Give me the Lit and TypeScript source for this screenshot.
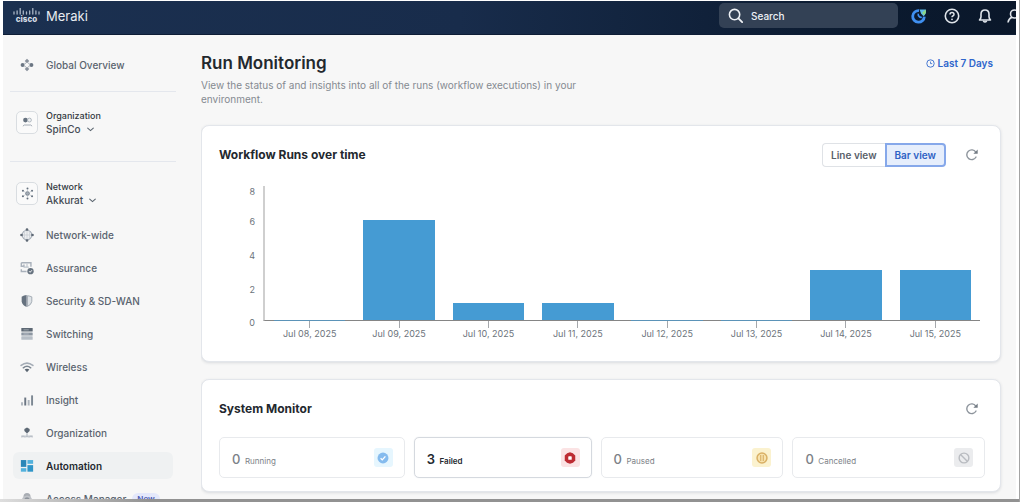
import { LitElement, html, css, svg } from "lit";
import { customElement, property, state } from "lit/decorators.js";
import { classMap } from "lit/directives/class-map.js";

const icons: Record<string, unknown> = {
  overview: svg`<g fill="#6b7683"><path d="M8 .8l2.600 2.600L8 6 5.400 3.400z" opacity=".8"/><path d="M8 10l2.600 2.600L8 15.200l-2.600-2.600z" opacity=".8"/><circle cx="3" cy="8" r="2.300"/><circle cx="13" cy="8" r="2.300"/></g><path d="M5.400 5.600l1 1M10.600 5.600l-1 1M5.400 10.400l1-1M10.600 10.400l-1-1" stroke="#a9b0b9" stroke-width="1.400"/>`,
  wide: svg`<circle cx="8" cy="8" r="5.500" fill="#eef0f2" stroke="#a4acb6" stroke-width="1.200"/><path d="M8 3v10M3 8h10M5.600 3.600q-1.600 4.400 0 8.800M10.400 3.600q1.600 4.400 0 8.800" fill="none" stroke="#c3c9d0" stroke-width=".8"/><g fill="#5d6874"><circle cx="8" cy="1.700" r="1.500"/><circle cx="8" cy="14.300" r="1.500"/><circle cx="1.700" cy="8" r="1.500"/><circle cx="14.300" cy="8" r="1.500"/></g>`,
  assurance: svg`<path d="M1.500 2h11v4.500M1.500 2v4h3v-2M1.500 9.500v2.500h6" fill="none" stroke="#a9b1bb" stroke-width="1.600"/><path d="M4 7h6M8 3v4" stroke="#bcc3cb" stroke-width="1.200"/><circle cx="12" cy="11.600" r="3.600" fill="#66727f"/><path d="M10.400 11.700l1.200 1.200 2-2.300" fill="none" stroke="#fff" stroke-width="1.100"/>`,
  shield: svg`<path d="M7.600 1.200Q4.500 1.700 1.900 3v5.500q.6 4.300 5.700 6.300z" fill="#66727f"/><path d="M8.500 1.900Q11.500 2.400 13.500 3.300v5.200q-.5 3.800-5 5.700z" fill="#dfe3e7" stroke="#9aa3ad" stroke-width="1"/>`,
  switching: svg`<rect x="1.500" y="1.200" width="13" height="4" rx=".6" fill="#5d6874"/><rect x="1.500" y="6.200" width="13" height="3.500" rx=".6" fill="#8d97a2"/><rect x="1.500" y="10.700" width="13" height="3.900" rx=".6" fill="#b7bec6"/><path d="M4 3.300h6M4 8h6" stroke="#c9ced4" stroke-width=".7"/>`,
  wireless: svg`<g fill="none" stroke-linecap="round"><path d="M1.300 6.200q6.700-5.300 13.400 0" stroke="#a4acb6" stroke-width="1.800"/><path d="M3.800 8.900q4.200-3.500 8.400 0" stroke="#7d8893" stroke-width="1.800"/></g><path d="M5.300 10.900q2.700-1.900 5.400 0L8 14z" fill="#596470"/>`,
  insight: svg`<path d="M2.300 14.300V10.500" stroke="#aeb5bd" stroke-width="2.200"/><path d="M6 14.300V5.200" stroke="#6b7683" stroke-width="2.200"/><path d="M9.900 14.300V8" stroke="#aeb5bd" stroke-width="2.200"/><path d="M13.800 14.300V2.700" stroke="#7d8893" stroke-width="2.200"/>`,
  org: svg`<path d="M8 1.800l3 1.500v2.500L8 8.500 5 5.800V3.300z" fill="#5d6874"/><path d="M2.200 13v-1.500h2.600V13M6.700 13v-1.500h2.600V13M11.200 13v-1.500h2.600V13M8 8.500v2" fill="none" stroke="#b0b7c0" stroke-width="1.300"/>`,
  automation: svg`<rect x="1" y="1.200" width="6.200" height="7.800" fill="#2a87b8"/><rect x="8.500" y="1.200" width="6.500" height="4.300" fill="#52b1dc"/><rect x="1" y="10.500" width="6.200" height="4" fill="#52b1dc"/><rect x="8.500" y="7" width="6.500" height="7.500" fill="#2f95c8"/>`,
  access: svg`<circle cx="8" cy="5" r="4" fill="#a9adb3"/><circle cx="8" cy="10" r="6" fill="#c0c3c8"/><circle cx="8" cy="9" r="3" fill="#8d939b"/>`,
  spinco: svg`<circle cx="5.500" cy="5" r="2.900" fill="#66727f"/><circle cx="10.400" cy="5" r="2.400" fill="#eef0f2" stroke="#a4acb6"/><path d="M2.300 12.500l1.700-1.400h8l1.700 1.400" fill="none" stroke="#9aa3ad" stroke-width="1.100"/>`,
  network: svg`<circle cx="8" cy="8" r="2.300" fill="#a4acb6" stroke="#66727f"/><g fill="#66727f"><circle cx="8" cy="1.800" r="1.200"/><circle cx="8" cy="14.200" r="1.200"/><circle cx="2.400" cy="4.600" r="1.300"/><circle cx="13.600" cy="4.600" r="1.300"/><circle cx="2.400" cy="11.400" r="1.300"/><circle cx="13.600" cy="11.400" r="1.300"/></g><path d="M3.500 5.300l3 1.800M12.500 5.300l-3 1.800M3.500 10.700l3-1.800M12.500 10.700l-3-1.800M8 3v2.500M8 10.500v2.500" stroke="#b7bec6" stroke-width=".8"/>`,
  chevron: svg`<path d="M3 5.500l5 4.500 5-4.500" fill="none" stroke="#59636e" stroke-width="1.900" stroke-linecap="round"/>`,
  search: svg`<circle cx="7" cy="7" r="5.500" fill="none" stroke="#eef1f5" stroke-width="1.700"/><path d="M11.100 11.100l4 4" stroke="#eef1f5" stroke-width="1.900" stroke-linecap="round"/>`,
  assistant: svg`<path d="M8 2.600A5.800 5.800 0 1 0 13.300 8.600" fill="none" stroke="#3f8ff0" stroke-width="2.800"/><path d="M7.300 5.600a3 3 0 0 0 3.500 3.700" fill="none" stroke="#3f8ff0" stroke-width="1.600"/><path d="M8.500 1.500h6.300q.9 4.500-2.300 6.800l-2.300-2.500z" fill="#5fb9e8"/><path d="M11 4.800l4-3.300q.4 3.800-1.900 5.800z" fill="#8ed780"/>`,
  help: svg`<circle cx="8" cy="8" r="6.700" fill="none" stroke="#dfe4ea" stroke-width="1.600"/><path d="M6 6.600q0-2 2-2t2 1.800q0 1-1.200 1.600-.8.400-.8 1.200" fill="none" stroke="#dfe4ea" stroke-width="1.500"/><circle cx="8" cy="11.300" r=".9" fill="#dfe4ea"/>`,
  bell: svg`<path d="M2.500 12h11q-1.500-1.500-1.500-3.200V6.300q0-4.300-4-4.300T4 6.300v2.500Q4 10.500 2.500 12z" fill="none" stroke="#dfe4ea" stroke-width="1.600" stroke-linejoin="round"/><path d="M6.300 12.800q1.700 2.400 3.400 0" fill="none" stroke="#dfe4ea" stroke-width="1.600"/>`,
  user: svg`<circle cx="8.500" cy="6" r="4" fill="none" stroke="#dfe4ea" stroke-width="1.600"/><path d="M2 14.500q.6-4 4-5.200M15 14.500q-.6-4-4-5.200" fill="none" stroke="#dfe4ea" stroke-width="1.600"/>`,
  clock: svg`<circle cx="8" cy="8" r="6.600" fill="none" stroke="#3f72d0" stroke-width="1.700"/><path d="M8 4.500V8.200h3" fill="none" stroke="#3f72d0" stroke-width="1.500"/>`,
  refresh: svg`<path d="M12.600 10.300A5.600 5.600 0 1 1 12.300 4.600" fill="none" stroke="#8d949c" stroke-width="1.600" stroke-linecap="round"/><path d="M14.500 1.600v5H9.600z" fill="#737b84"/>`,
  running: svg`<circle cx="8" cy="8" r="7.300" fill="#85bbee"/><path d="M4.800 8.300l2.200 2.200 4.200-4.700" fill="none" stroke="#fff" stroke-width="1.800"/>`,
  failed: svg`<path d="M8 .3l3.800 1.300 3.200 3.100V11.200L12 14.300 8 15.700 4 14.300 1 11.200V4.700l3.200-3.100z" fill="#bd2c33"/><rect x="5.700" y="5.700" width="4.600" height="4.600" rx=".8" fill="#fff"/>`,
  paused: svg`<circle cx="8" cy="8" r="6.600" fill="#f7e3ae" stroke="#d9b065" stroke-width="2"/><path d="M6.300 4v8M9.700 4v8" stroke="#d9b065" stroke-width="1.500"/>`,
  cancelled: svg`<circle cx="8" cy="8" r="6.500" fill="none" stroke="#b9bcc1" stroke-width="1.900"/><path d="M3.700 3.700l8.600 8.600" stroke="#b9bcc1" stroke-width="1.900"/>`,
};

@customElement("ui-icon")
class UiIcon extends LitElement {
  static styles = css`
    :host { display: inline-flex; flex: none; width: 14px; height: 14px; }
    svg { display: block; width: 100%; height: 100%; }
  `;
  @property() name = "";
  render() {
    return html`<svg viewBox="0 0 16 16" aria-hidden="true">${icons[this.name]}</svg>`;
  }
}

@customElement("app-header")
class AppHeader extends LitElement {
  static styles = css`
    :host {
      display: flex; align-items: center; height: 34px; box-sizing: border-box;
      padding-left: 10px; padding-bottom: 4px; flex: none; overflow: hidden;
      background: linear-gradient(90deg, #1b3050 0%, #182c4b 45%, #0b1a2f 85%, #0a172a 100%);
      border-bottom: 1px solid #0e1d36; color: #e8ecf1;
    }
    .brand { display: flex; align-items: center; gap: 6px; color: inherit; text-decoration: none; font-size: 13px; line-height: 18px; }
    .logo { display: grid; width: 27px; justify-items: center; }
    .bars { width: 27px; height: 7px; display: block; }
    .cisco { font-size: 8px; line-height: 8px; font-weight: 800; color: #d5dce5; }
    .search {
      display: flex; align-items: center; gap: 8px; height: 25px; width: 179px; box-sizing: border-box;
      margin-left: auto; padding: 0 9px; border-radius: 5px; background: #334155;
    }
    .search ui-icon { width: 15px; height: 15px; }
    .search input {
      flex: 1; min-width: 0; border: 0; padding: 0; outline: 0; background: none;
      font: 500 10px/16px Inter, sans-serif; color: #fff;
    }
    .search input::placeholder { color: #eef1f5; opacity: 1; }
    .tools { display: flex; gap: 17px; margin-left: 13px; margin-right: -6px; }
    .tools button { display: flex; border: 0; padding: 0; background: none; }
    .tools button:last-child { margin-left: -4px; }
    .tools ui-icon { width: 16px; height: 16px; }
  `;
  render() {
    return html`
      <a class="brand" href="#">
        <span class="logo">
          <svg class="bars" viewBox="0 0 27 7" aria-hidden="true">
            <path d="M1 4v2M4.100 3v3M7.200 .5v5.500M10.300 3v3M13.500 4v2M16.700 3v3M19.800 .5v5.500M22.900 3v3M26 4v2" stroke="#a9b5c5" stroke-width="1.300" stroke-linecap="round"/>
          </svg>
          <span class="cisco">cisco</span>
        </span>
        <span>Meraki</span>
      </a>
      <label class="search">
        <ui-icon name="search"></ui-icon>
        <input type="search" placeholder="Search" aria-label="Search" />
      </label>
      <div class="tools">
        <button aria-label="Assistant"><ui-icon name="assistant"></ui-icon></button>
        <button aria-label="Help"><ui-icon name="help"></ui-icon></button>
        <button aria-label="Notifications"><ui-icon name="bell"></ui-icon></button>
        <button aria-label="Account"><ui-icon name="user"></ui-icon></button>
      </div>
    `;
  }
}

@customElement("side-nav")
class SideNav extends LitElement {
  static styles = css`
    :host { display: block; width: 198px; flex: none; box-sizing: border-box; padding: 16px 25px 0 7px; overflow: hidden; }
    a { color: inherit; text-decoration: none; }
    .item {
      display: flex; align-items: center; gap: 12px; height: 27px; margin: 0 3px 6px; padding: 0 7px;
      border-radius: 6px; font-size: 10px; line-height: 14px; font-weight: 500; color: #5a646f;
    }
    .item.active { background: #eff1f2; color: #23282e; font-weight: 600; }
    .rule { height: 0; border: 0; border-top: 1px solid #e4e7ed; margin: 0; }
    .top { margin-bottom: 13px; }
    .picker {
      display: flex; align-items: center; gap: 8px; padding: 0 0 0 6px; border: 0; background: none;
      font: 500 10px/14px Inter, sans-serif; color: #454c54; text-align: left;
    }
    .org { margin: 17px 0 25px; }
    .net { margin: 18px 0 14px; }
    .box {
      display: flex; align-items: center; justify-content: center; width: 22px; height: 23px; box-sizing: border-box;
      border: 1px solid #d9dde1; border-radius: 5px; background: #fafafa;
    }
    .box ui-icon { width: 13px; height: 13px; }
    .kind { display: block; font-size: 9px; line-height: 13px; color: #33393f; }
    .name { display: flex; align-items: center; gap: 5px; }
    .name ui-icon { width: 9px; height: 9px; }
    .badge { margin-left: -6px; padding: 0 5px; border-radius: 6px; background: #e4e8fb; color: #4a5bb5; font-size: 8px; line-height: 12px; font-weight: 600; }
  `;
  private items = [
    ["wide", "Network-wide"], ["assurance", "Assurance"], ["shield", "Security & SD-WAN"],
    ["switching", "Switching"], ["wireless", "Wireless"], ["insight", "Insight"],
    ["org", "Organization"], ["automation", "Automation"], ["access", "Access Manager"],
  ];
  render() {
    return html`
      <nav>
        <a class="item top" href="#"><ui-icon name="overview"></ui-icon>Global Overview</a>
        <hr class="rule" />
        <button class="picker org">
          <span class="box"><ui-icon name="spinco"></ui-icon></span>
          <span><span class="kind">Organization</span><span class="name">SpinCo <ui-icon name="chevron"></ui-icon></span></span>
        </button>
        <hr class="rule" />
        <button class="picker net">
          <span class="box"><ui-icon name="network"></ui-icon></span>
          <span><span class="kind">Network</span><span class="name">Akkurat <ui-icon name="chevron"></ui-icon></span></span>
        </button>
        ${this.items.map(([icon, text]) => html`
          <a class=${classMap({ item: true, active: text === "Automation" })} href="#">
            <ui-icon name=${icon}></ui-icon>${text}
            ${icon === "access" ? html`<span class="badge">New</span>` : ""}
          </a>`)}
      </nav>
    `;
  }
}

@customElement("runs-chart")
class RunsChart extends LitElement {
  static styles = css`
    :host { display: grid; grid-template-columns: 36px 1fr; column-gap: 8px; font-size: 9px; line-height: 12px; color: #6c737b; }
    .scale { display: grid; grid-template-rows: 30px 34px 34px 33px 12px; text-align: right; }
    .plot {
      display: grid; grid-template-columns: repeat(8, 1fr); height: 135px; box-sizing: border-box;
      border-left: 2px solid #cfcfcf; border-bottom: 1px solid #858585;
    }
    .slot { display: flex; align-items: flex-end; justify-content: center; }
    .bar { width: 80%; min-height: 1px; background: #459bd3; }
    .bar.none { margin-bottom: -1px; background: #5b93b8; }
    .days { display: grid; grid-template-columns: repeat(8, 1fr); padding-left: 2px; }
    .day { display: grid; justify-items: center; white-space: nowrap; }
    .day::before { content: ""; width: 1px; height: 7px; background: #a5a8ac; }
  `;
  private data: [string, number][] = [
    ["Jul 08, 2025", 0], ["Jul 09, 2025", 6], ["Jul 10, 2025", 1], ["Jul 11, 2025", 1],
    ["Jul 12, 2025", 0], ["Jul 13, 2025", 0], ["Jul 14, 2025", 3], ["Jul 15, 2025", 3],
  ];
  render() {
    return html`
      <div class="scale">${[8, 6, 4, 2, 0].map((n) => html`<span>${n}</span>`)}</div>
      <div>
        <div class="plot">
          ${this.data.map(([, n]) => html`
            <div class="slot"><div class=${classMap({ bar: true, none: n === 0 })} style="height:${(n / 8) * 100}%"></div></div>`)}
        </div>
        <div class="days">${this.data.map(([day]) => html`<span class="day">${day}</span>`)}</div>
      </div>
    `;
  }
}

@customElement("app-root")
class AppRoot extends LitElement {
  static styles = css`
    :host {
      display: flex; flex-direction: column; height: 100vh; box-sizing: border-box; overflow: hidden;
      padding: 1px 3px 0 3px; border-right: 1px solid #a3a3a3;
      background: #fff; font-family: Inter, sans-serif; color: #23282e;
    }
    .body { display: flex; flex: 1; min-height: 0; background: #f7f7f7; }
    .edge { height: 3px; flex: none; margin: 0 -4px 0 -3px; background: linear-gradient(90deg, #dedede, #929292 150px); }
    main { flex: 1; min-width: 0; padding: 18px 15px 0 0; overflow: hidden; }
    .head { display: flex; justify-content: space-between; align-items: flex-start; padding-right: 8px; }
    h1 { margin: 0; font-size: 17px; line-height: 20px; font-weight: 600; }
    .intro { margin: 5px 0 19px; max-width: 390px; font-size: 10px; line-height: 14px; color: #858a91; }
    .range { display: flex; align-items: center; gap: 3px; margin-top: 3px; border: 0; padding: 0; background: none; font: 600 10px/14px Inter, sans-serif; color: #2f66cc; }
    .range ui-icon { width: 9px; height: 9px; }
    .card {
      box-sizing: border-box; padding: 17px 15px 0 17px; margin-bottom: 17px; background: #fff;
      border: 1px solid #e3e6eb; border-radius: 8px; box-shadow: 0 1px 3px rgba(40, 55, 80, 0.14);
    }
    .bar { display: flex; align-items: center; height: 24px; }
    h2 { margin: 0 auto 0 0; font-size: 12px; line-height: 16px; font-weight: 700; }
    .toggle { display: flex; margin-right: 19px; }
    .toggle button {
      height: 24px; padding: 0 8px; border: 1px solid #dfe2e6; background: #fff;
      font: 600 10px/14px Inter, sans-serif; color: #596069;
    }
    .toggle button:first-child { border-radius: 4px 0 0 4px; border-right: 0; }
    .toggle button:last-child { border-radius: 0 4px 4px 0; }
    .toggle button.on { border: 2px solid #86a8ea; background: #e6eefc; color: #2f62c4; }
    .refresh { display: flex; border: 0; padding: 0 6px 0 0; background: none; }
    .refresh ui-icon { width: 14px; height: 14px; }
    runs-chart { margin: 19px 5px 21px 0; }
    .stats { display: flex; gap: 9px; margin: 16px 0 13px; }
    .stat {
      flex: 1 1 auto; display: flex; align-items: center; justify-content: space-between; box-sizing: border-box;
      height: 41px; padding: 0 11px 0 12px; border: 1px solid #e8eaed; border-radius: 5px; color: #7c8187;
    }
    .stat.on { border-color: #d5d9df; box-shadow: 0 0 1px #d5d9df; color: #23282e; }
    .num { font-size: 13px; font-weight: 500; }
    .stat.on .num, .stat.on .kind { font-weight: 600; }
    .kind { font-size: 8px; }
    .chip { display: flex; align-items: center; justify-content: center; width: 19px; height: 19px; border-radius: 3px; }
    .chip ui-icon { width: 12px; height: 12px; }
    .running { background: #e6f6fe; }
    .failed { background: #fbe3e4; }
    .paused { background: #fbf2cf; }
    .cancelled { background: #ebecee; }
  `;
  @state() private view = "Bar view";
  private stats: [string, number][] = [["Running", 0], ["Failed", 3], ["Paused", 0], ["Cancelled", 0]];
  render() {
    return html`
      <app-header></app-header>
      <div class="body">
        <side-nav></side-nav>
        <main>
          <div class="head">
            <div>
              <h1>Run Monitoring</h1>
              <p class="intro">View the status of and insights into all of the runs (workflow executions) in your environment.</p>
            </div>
            <button class="range"><ui-icon name="clock"></ui-icon>Last 7 Days</button>
          </div>
          <section class="card">
            <div class="bar">
              <h2>Workflow Runs over time</h2>
              <div class="toggle">
                ${["Line view", "Bar view"].map((v) => html`
                  <button class=${classMap({ on: this.view === v })} @click=${() => (this.view = v)}>${v}</button>`)}
              </div>
              <button class="refresh" aria-label="Refresh runs"><ui-icon name="refresh"></ui-icon></button>
            </div>
            <runs-chart></runs-chart>
          </section>
          <section class="card">
            <div class="bar">
              <h2>System Monitor</h2>
              <button class="refresh" aria-label="Refresh monitor"><ui-icon name="refresh"></ui-icon></button>
            </div>
            <div class="stats">
              ${this.stats.map(([kind, n]) => html`
                <div class=${classMap({ stat: true, on: n > 0 })}>
                  <span><span class="num">${n}</span> <span class="kind">${kind}</span></span>
                  <span class="chip ${kind.toLowerCase()}"><ui-icon name=${kind.toLowerCase()}></ui-icon></span>
                </div>`)}
            </div>
          </section>
        </main>
      </div>
      <div class="edge"></div>
    `;
  }
}
